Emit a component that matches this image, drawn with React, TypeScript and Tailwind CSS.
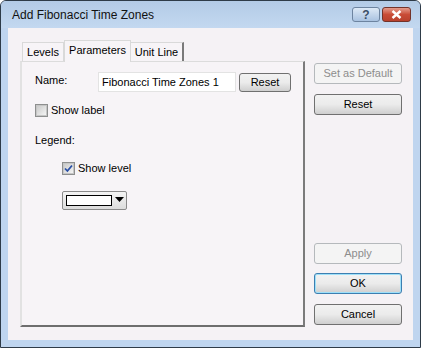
import type { ReactNode } from 'react'

type BtnProps = {
  children: ReactNode
  disabled?: boolean
  primary?: boolean
  className?: string
}

function Btn({ children, disabled, primary, className = '' }: BtnProps) {
  const tone = disabled
    ? 'border-[#b5b9bc] bg-[#f4f4f4] text-[#8d8d8d]'
    : primary
      ? 'border-[#3c7fb1] bg-gradient-to-b from-[#f2f2f2] via-[#ebebeb] to-[#cfcfcf] text-black shadow-[inset_0_0_0_1px_#9ee0f9]'
      : 'border-[#707070] bg-gradient-to-b from-[#f2f2f2] via-[#ebebeb] to-[#cfcfcf] text-black'
  return (
    <div
      className={`flex items-center justify-center rounded-[3px] border text-[11px] leading-none ${tone} ${className}`}
    >
      {children}
    </div>
  )
}

function Check({ checked }: { checked?: boolean }) {
  return (
    <div className="flex h-[13px] w-[13px] items-center justify-center border border-[#8e8f8f] bg-white">
      <div className="flex h-[11px] w-[11px] items-center justify-center border border-[#c6c6c6] bg-gradient-to-br from-[#cbcbcb] to-[#f4f4f4]">
        {checked && (
          <svg width="9" height="9" viewBox="0 0 9 9">
            <path d="M1 4.5 L3.4 7 L8 1.5" fill="none" stroke="#2a4fa6" strokeWidth="1.8" />
          </svg>
        )}
      </div>
    </div>
  )
}

function App() {
  return (
    <div
      className="flex h-[348px] w-[421px] flex-col overflow-hidden rounded-t-[6px] border border-[#2e3b48] bg-[#bfd5ef] text-[11px] text-black"
      style={{ fontFamily: '"Liberation Sans", Arial, sans-serif' }}
    >
      <div className="flex h-[27px] items-center bg-gradient-to-b from-[#b3cbe6] to-[#c3d8f0] pl-[11px] pr-[9px]">
        <span className="mt-[1px] text-[12px] text-[#111]">Add Fibonacci Time Zones</span>
        <div className="ml-auto flex gap-[2px]">
          <div className="flex h-[15px] w-[28px] items-center justify-center rounded-[3px] border border-[#6d84a0] bg-gradient-to-b from-[#dde9f6] to-[#a9c2e0] text-[12px] font-bold leading-none text-[#3a4e66]">
            ?
          </div>
          <div className="flex h-[15px] w-[29px] items-center justify-center rounded-[3px] border border-[#73332a] bg-gradient-to-b from-[#e39b8c] via-[#c94c36] to-[#b8412d]">
            <svg width="11" height="9" viewBox="0 0 11 9">
              <path d="M1.5 1 L9.5 8 M9.5 1 L1.5 8" stroke="#fff" strokeWidth="2.4" />
            </svg>
          </div>
        </div>
      </div>

      <div className="mx-[7px] mb-[7px] flex flex-1 bg-[#f5f2f5] pb-[13px] pl-[12px] pr-[11px] pt-[12px]">
        <div className="flex w-[285px] flex-col">
          <div className="flex h-[21px] items-end pl-[2px]">
            <div className="flex h-[19px] w-[42px] items-center justify-center border-l border-t border-r border-[#d9d9d9] bg-[#f7f4f7]">
              Levels
            </div>
            <div className="relative -mb-[1px] flex h-[22px] w-[67px] items-center justify-center border-l border-t border-r border-[#d9d9d9] bg-[#f7f4f7] pb-[2px]">
              Parameters
            </div>
            <div className="flex h-[19px] w-[53px] items-center justify-center border-r-2 border-t border-[#d9d9d9] border-r-[#7a7a7a] bg-[#f7f4f7]">
              Unit Line
            </div>
          </div>
          <div className="flex flex-1 flex-col border-b-2 border-l-2 border-r-2 border-t border-b-[#6e6e6e] border-l-[#e2e2e2] border-r-[#7b7b7b] border-t-[#dcdcdc] bg-[#f7f4f7] pl-[13px]">
            <div className="mt-[10px] flex items-center">
              <span className="w-[63px] -translate-y-[2px]">Name:</span>
              <div className="flex h-[20px] w-[138px] items-center border border-[#e3e3e3] bg-white pl-[3px]">
                Fibonacci Time Zones 1
              </div>
              <Btn className="ml-[3px] h-[19px] w-[52px]">Reset</Btn>
            </div>
            <div className="mt-[10px] flex items-center gap-[3px]">
              <Check />
              <span>Show label</span>
            </div>
            <div className="mt-[13px]">Legend:</div>
            <div className="ml-[27px] mt-[12px] flex items-center gap-[3px]">
              <Check checked />
              <span>Show level</span>
            </div>
            <div className="ml-[27px] mt-[14px] flex h-[19px] w-[65px] items-center rounded-[2px] border border-[#8a8a8a] bg-gradient-to-b from-[#f4f4f4] to-[#dcdcdc] pl-[3px]">
              <div className="h-[11px] w-[46px] border border-black bg-white" />
              <svg className="ml-[3px]" width="9" height="6" viewBox="0 0 9 6">
                <path d="M0 0 H9 L4.5 5 Z" fill="#000" />
              </svg>
            </div>
          </div>
        </div>

        <div className="ml-[9px] flex w-[88px] flex-col pt-[23px]">
          <Btn disabled className="h-[21px]">Set as Default</Btn>
          <Btn className="mt-[10px] h-[21px]">Reset</Btn>
          <div className="flex-1" />
          <Btn disabled className="h-[21px]">Apply</Btn>
          <Btn primary className="mt-[9px] h-[21px]">OK</Btn>
          <Btn className="mt-[10px] h-[21px]">Cancel</Btn>
          <div className="h-[2px]" />
        </div>
      </div>
    </div>
  )
}

export default App
